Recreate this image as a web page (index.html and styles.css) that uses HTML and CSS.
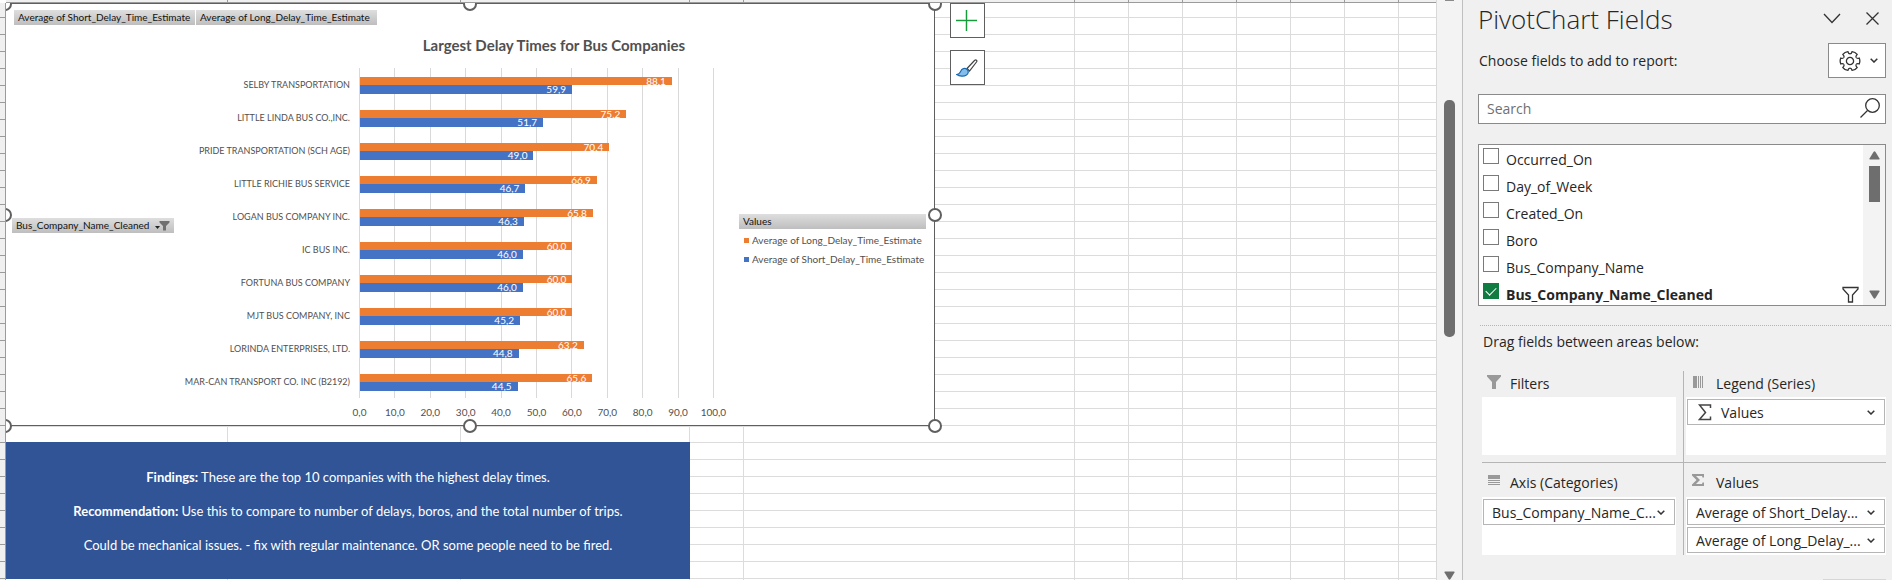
FILE: index.html
```html
<!DOCTYPE html>
<html lang="en">
<head>
<meta charset="utf-8">
<title>Bus delays workbook</title>
<link rel="stylesheet" href="styles.css">
</head>
<body>
<div class="app">
  <main class="workbook">
    <div class="column-heads columns"><i></i><i></i><i></i><i></i><i></i><i></i><i></i><i></i><i></i><i></i><i></i><i></i></div>
    <div class="row-heads"></div>
    <div class="cells">
      <div class="gridlines columns"><i></i><i></i><i></i><i></i><i></i><i></i><i></i><i></i><i></i><i></i><i></i><i></i></div>
      <div class="objects">
        <div class="chart-group">
          <section class="chart">
            <div class="value-fields">
              <button class="field-button">Average of Short_Delay_Time_Estimate</button>
              <button class="field-button">Average of Long_Delay_Time_Estimate</button>
            </div>
            <h2 class="chart-title">Largest Delay Times for Bus Companies</h2>
            <div class="chart-body">
              <button class="field-button axis-field">Bus_Company_Name_Cleaned
                <svg width="15" height="11" viewBox="0 0 15 11"><path d="M0 6h5L2.500 9z" fill="#222"/><path d="M4.500 1h10v1.500L11 6v4.500H8V6L4.500 2.500z" fill="#707070"/></svg>
              </button>
              <ul class="categories">
                <li>SELBY TRANSPORTATION</li>
                <li>LITTLE LINDA BUS CO.,INC.</li>
                <li>PRIDE TRANSPORTATION (SCH AGE)</li>
                <li>LITTLE RICHIE BUS SERVICE</li>
                <li>LOGAN BUS COMPANY INC.</li>
                <li>IC BUS INC.</li>
                <li>FORTUNA BUS COMPANY</li>
                <li>MJT BUS COMPANY, INC</li>
                <li>LORINDA ENTERPRISES, LTD.</li>
                <li>MAR-CAN TRANSPORT CO. INC (B2192)</li>
              </ul>
              <div class="plot-column">
                <div class="plot">
                  <div class="plot-lines"><i></i><i></i><i></i><i></i><i></i><i></i><i></i><i></i><i></i><i></i><i></i></div>
                  <div class="bars">
                    <div class="pair"><div class="bar long" style="width:88.1%">88,1</div><div class="bar short" style="width:59.9%">59,9</div></div>
                    <div class="pair"><div class="bar long" style="width:75.2%">75,2</div><div class="bar short" style="width:51.7%">51,7</div></div>
                    <div class="pair"><div class="bar long" style="width:70.4%">70,4</div><div class="bar short" style="width:49%">49,0</div></div>
                    <div class="pair"><div class="bar long" style="width:66.9%">66,9</div><div class="bar short" style="width:46.7%">46,7</div></div>
                    <div class="pair"><div class="bar long" style="width:65.8%">65,8</div><div class="bar short" style="width:46.3%">46,3</div></div>
                    <div class="pair"><div class="bar long" style="width:60%">60,0</div><div class="bar short" style="width:46%">46,0</div></div>
                    <div class="pair"><div class="bar long" style="width:60%">60,0</div><div class="bar short" style="width:46%">46,0</div></div>
                    <div class="pair"><div class="bar long" style="width:60%">60,0</div><div class="bar short" style="width:45.2%">45,2</div></div>
                    <div class="pair"><div class="bar long" style="width:63.2%">63,2</div><div class="bar short" style="width:44.8%">44,8</div></div>
                    <div class="pair"><div class="bar long" style="width:65.6%">65,6</div><div class="bar short" style="width:44.5%">44,5</div></div>
                  </div>
                </div>
                <div class="ticks"><span>0,0</span><span>10,0</span><span>20,0</span><span>30,0</span><span>40,0</span><span>50,0</span><span>60,0</span><span>70,0</span><span>80,0</span><span>90,0</span><span>100,0</span></div>
              </div>
              <div class="legend">
                <button class="field-button legend-field">Values</button>
                <div class="legend-item"><i class="swatch long"></i>Average of Long_Delay_Time_Estimate</div>
                <div class="legend-item"><i class="swatch short"></i>Average of Short_Delay_Time_Estimate</div>
              </div>
            </div>
            <i class="handle top left"></i><i class="handle top center"></i><i class="handle top right"></i>
            <i class="handle middle left"></i><i class="handle middle right"></i>
            <i class="handle bottom left"></i><i class="handle bottom center"></i><i class="handle bottom right"></i>
          </section>
          <div class="chart-tools">
            <button class="tool" aria-label="Chart elements"><svg width="21" height="21" viewBox="0 0 21 21"><path d="M10.500 0v21M0 10.500h21" stroke="#8fd0a2" stroke-width="2"/><path d="M10.500 0v21M0 10.500h21" stroke="#189a3c"/></svg></button>
            <button class="tool" aria-label="Chart styles"><svg width="22" height="18" viewBox="0 0 22 18"><path d="M11 9.500 18.500 1.500c1.500-1.300 3 0 2 1.500L13.500 12z" fill="#fff" stroke="#444" stroke-width="1.200"/><path d="M.8 15.500c2.800-.3 3-1.500 4-3.500 1-2.300 4-3.300 6-1.800 2.200 1.700 1.800 4.300-.3 5.800-2.700 1.800-7.200 1.300-9.700-.5z" fill="#83bdec" stroke="#1769b5" stroke-width="1.200"/></svg></button>
          </div>
        </div>
        <section class="findings">
          <p><strong>Findings:</strong> These are the top 10 companies with the highest delay times.</p>
          <p><strong>Recommendation:</strong> Use this to compare to number of delays, boros, and the total number of trips.</p>
          <p>Could be mechanical issues. - fix with regular maintenance. OR some people need to be fired.</p>
        </section>
      </div>
    </div>
  </main>

  <div class="sheet-scroll">
    <i class="arrow-stub"></i>
    <i class="scroll-thumb"></i>
    <svg class="scroll-down" width="11" height="9" viewBox="0 0 11 9"><path d="M1 .5h9q1 0 .5 1L6.500 8q-1 1.500-2 0L.5 1.500Q0 .5 1 .5z" fill="#6e6e6e"/></svg>
  </div>

  <aside class="pane">
    <header class="pane-head">
      <h1>PivotChart Fields</h1>
      <button class="icon-button" aria-label="Pane options"><svg width="18" height="11" viewBox="0 0 18 11"><path d="M1 1l8 8.500L17 1"/></svg></button>
      <button class="icon-button" aria-label="Close"><svg width="13" height="13" viewBox="0 0 13 13"><path d="M.5.5l12 12M12.500.5l-12 12"/></svg></button>
    </header>
    <div class="choose">
      <span>Choose fields to add to report:</span>
      <button class="gear" aria-label="Tools">
        <svg width="22" height="22" viewBox="-11 -11 22 22"><circle r="3.600"/><path id="tooth" d="M6.100 -3.500Q7 -2.200 9.200 -2.900Q10.500 0 9.200 2.900Q7 2.200 6.100 3.500"/><use href="#tooth" transform="rotate(60)"/><use href="#tooth" transform="rotate(120)"/><use href="#tooth" transform="rotate(180)"/><use href="#tooth" transform="rotate(240)"/><use href="#tooth" transform="rotate(300)"/></svg>
        <svg class="chevron" width="8" height="5" viewBox="0 0 8 5"><path d="M.7.7L4 4 7.300.7"/></svg>
      </button>
    </div>
    <div class="search">
      <input type="text" placeholder="Search" aria-label="Search">
      <svg width="20" height="20" viewBox="0 0 20 20"><circle cx="12.500" cy="7.500" r="6.800"/><path d="M7.500 12.500L.5 19.500"/></svg>
    </div>
    <div class="fields">
      <div class="field-list">
        <label><input type="checkbox">Occurred_On</label>
        <label><input type="checkbox">Day_of_Week</label>
        <label><input type="checkbox">Created_On</label>
        <label><input type="checkbox">Boro</label>
        <label><input type="checkbox">Bus_Company_Name</label>
        <label class="used"><input type="checkbox" checked>Bus_Company_Name_Cleaned
          <svg width="17" height="17" viewBox="0 0 17 17"><path d="M1 1.500h15v1.500l-5.500 6V16h-4V9L1 3z"/></svg></label>
      </div>
      <div class="list-scroll">
        <svg width="11" height="9" viewBox="0 0 11 9"><path d="M1 8.500h9q1 0 .5-1L6.500 1q-1-1.500-2 0L.5 7.500Q0 8.500 1 8.500z"/></svg>
        <i></i>
        <svg width="11" height="9" viewBox="0 0 11 9"><path d="M1 .5h9q1 0 .5 1L6.500 8q-1 1.500-2 0L.5 1.500Q0 .5 1 .5z"/></svg>
      </div>
    </div>
    <p class="drag">Drag fields between areas below:</p>
    <div class="areas">
      <section class="area">
        <h3><svg width="16" height="16" viewBox="0 0 16 16"><path d="M1 0h14v1.500L10 7v7H6V7L1 1.500z" fill="#999"/></svg>Filters</h3>
        <div class="drop"></div>
      </section>
      <section class="area">
        <h3><svg width="16" height="16" viewBox="0 0 16 16"><path d="M3 1h4v12H3zM8 1h1v12H8zM10 1h1v12h-1zM12 1h1v12h-1z" fill="#999"/></svg>Legend (Series)</h3>
        <div class="drop">
          <button class="item"><svg class="sigma" width="14" height="17" viewBox="0 0 14 17"><path d="M12.500 4V1H1.500l6 7.500-6 7h11v-3" fill="none" stroke="#444" stroke-width="1.500"/></svg>Values<svg class="chevron" width="8" height="5" viewBox="0 0 8 5"><path d="M.7.7L4 4 7.300.7"/></svg></button>
        </div>
      </section>
      <section class="area">
        <h3><svg width="16" height="16" viewBox="0 0 16 16"><path d="M2 1h12v4H2zM2 6h12v1H2zM2 8h12v1H2zM2 10h12v1H2z" fill="#999"/></svg>Axis (Categories)</h3>
        <div class="drop">
          <button class="item">Bus_Company_Name_C...<svg class="chevron" width="8" height="5" viewBox="0 0 8 5"><path d="M.7.7L4 4 7.300.7"/></svg></button>
        </div>
      </section>
      <section class="area">
        <h3><svg width="16" height="16" viewBox="0 0 16 16"><path d="M2 0h12v3.500h-1.500L12 2H6l4 4-4 4h6l.5-1.500H14V12H2v-1.500L6.500 6 2 1.500z" fill="#999"/></svg>Values</h3>
        <div class="drop">
          <button class="item">Average of Short_Delay...<svg class="chevron" width="8" height="5" viewBox="0 0 8 5"><path d="M.7.7L4 4 7.300.7"/></svg></button>
          <button class="item">Average of Long_Delay_...<svg class="chevron" width="8" height="5" viewBox="0 0 8 5"><path d="M.7.7L4 4 7.300.7"/></svg></button>
        </div>
      </section>
    </div>
    <div class="update-edge"></div>
  </aside>
</div>
</body>
</html>
```
FILE: styles.css
```css
* { box-sizing: border-box; }
body { margin: 0; font-family: "Open Sans", "Noto Sans", sans-serif; font-size: 14px; color: #262626; }
h1, h2, h3, p, ul { margin: 0; padding: 0; font-weight: 400; }
ul { list-style: none; }
button { font: inherit; color: inherit; padding: 0; margin: 0; border: 0; background: none; }
svg { flex: none; display: block; }

.app { display: flex; height: 100vh; overflow: hidden; }

/* worksheet */
.workbook { flex: 1; min-width: 0; display: grid; grid-template: 3px 1fr / 6px 1fr; background: #fff; border-right: 1px solid #d9d9d9; }
.columns { display: grid; grid-template-columns: 222px 233px 229px 54px 331px repeat(6, 54px) 1fr; }
.columns i { border-right: 1px solid #dcdcdc; }
.columns i:last-child { border-right: 0; }
.column-heads { grid-column: 2; background: #f0f0f0; border-bottom: 1px solid #9b9b9b; }
.column-heads i { border-color: #9b9b9b; }
.row-heads { grid-column: 1; grid-row: 2; border-right: 1px solid #9b9b9b; background: #f0f0f0 repeating-linear-gradient(#0000 0 14px, #9b9b9b 14px 15px, #0000 15px 17px); }
.cells { grid-column: 2; grid-row: 2; display: grid; overflow: hidden; min-height: 0; }
.gridlines, .objects { grid-area: 1 / 1; min-height: 0; }
.gridlines { background: repeating-linear-gradient(#0000 0 14px, #dcdcdc 14px 15px, #0000 15px 17px); }
.objects { display: flex; flex-direction: column; align-items: flex-start; gap: 16px; font-family: Lato, Carlito, sans-serif; }
.chart-group { display: flex; gap: 15px; align-items: flex-start; }

/* chart */
.chart { position: relative; width: 929px; padding: 6px 8px 4px 6px; background: #fff; border: 1px solid #5f5f5f; border-left: 0; color: #505050; box-shadow: 0 1px #dcdcdc; }
.value-fields { display: flex; gap: 1px; padding-left: 2px; }
.field-button { display: flex; align-items: center; height: 15px; padding: 0 4px; font-size: 10px; line-height: 15px; color: #111; background: linear-gradient(#dedede, #bebebe); white-space: nowrap; }
.value-fields .field-button { width: 181px; }
.chart-title { margin: 10px 0 13px 170px; font-size: 15px; font-weight: 700; line-height: 20px; text-align: center; }
.chart-body { display: flex; align-items: flex-start; }
.axis-field { width: 162px; margin-top: 150px; justify-content: space-between; }
.categories { flex: 1; padding-right: 9px; font-size: 9px; text-align: right; white-space: nowrap; }
.categories li { line-height: 33px; }
.plot-column { width: 355px; }
.plot { display: grid; }
.plot-lines, .bars { grid-area: 1 / 1; }
.plot-lines { display: flex; justify-content: space-between; }
.plot-lines i { width: 1px; background: #d9d9d9; }
.bars { padding-left: 1px; }
.pair { padding: 9px 0 7px; }
.bar { position: relative; padding-right: 6px; color: #fff; font-size: 10px; text-align: right; }
.long { background: #ed7d31; }
.short { background: #4472c4; }
.bar.long { height: 8px; line-height: 9px; }
.bar.short { height: 9px; line-height: 9px; }
.ticks { display: flex; justify-content: space-between; margin-top: 5px; font-size: 10px; line-height: 18px; }
.ticks span { display: flex; justify-content: center; width: 1px; white-space: nowrap; }
.legend { width: 187px; margin: 146px 0 0 25px; font-size: 10px; }
.legend-field { width: 100%; margin-bottom: 2px; }
.legend-item { display: flex; align-items: center; gap: 3px; padding-left: 5px; line-height: 19px; white-space: nowrap; }
.swatch { width: 5px; height: 5px; }
.handle { position: absolute; width: 14px; height: 14px; border: 2px solid #5f5f5f; border-radius: 50%; background: #fff; }
.handle.top { top: -7px; }
.handle.middle { top: calc(50% - 7px); }
.handle.bottom { bottom: -8px; }
.handle.left { left: -8px; }
.handle.center { left: calc(50% - 7px); }
.handle.right { right: -8px; }
.chart-tools { display: flex; flex-direction: column; gap: 12px; }
.tool { display: flex; align-items: center; justify-content: center; width: 35px; height: 35px; padding-right: 2px; background: #fff; border: 1px solid #5f5f5f; }

.findings { width: 684px; padding: 18px 0 17px; background: #305496; color: #fff; font-size: 13px; line-height: 34px; text-align: center; white-space: nowrap; }

/* worksheet scroll bar */
.sheet-scroll { display: flex; flex-direction: column; align-items: center; width: 25px; background: #f3f3f3; }
.arrow-stub { width: 9px; height: 1px; margin-bottom: 99px; background: #8a8a8a; }
.scroll-thumb { width: 11px; height: 237px; border-radius: 5px; background: #6e6e6e; }
.scroll-down { margin-top: auto; }

/* field pane */
.pane { display: flex; flex-direction: column; width: 430px; padding: 0 6px 0 15px; background: #f0f0f0; border-left: 1px solid #bfbfbf; }
.pane svg { fill: none; stroke: #333; stroke-width: 1.3px; }
.pane-head { display: flex; align-items: center; height: 37px; margin-bottom: 6px; padding-right: 7px; }
.pane-head h1 { flex: 1; font-size: 26px; line-height: 36px; font-weight: 300; }
.icon-button + .icon-button { margin-left: 25px; }
.choose { display: flex; align-items: center; justify-content: space-between; padding-left: 1px; }
.gear { display: flex; align-items: center; justify-content: center; gap: 9px; width: 58px; height: 35px; padding-left: 2px; background: #fff; border: 1px solid #8a8a8a; }
.pane .chevron { stroke-width: 1.5px; }
.search { display: flex; align-items: center; height: 30px; margin: 16px 0 20px; padding: 0 5px 2px 8px; background: #fff; border: 1px solid #8a8a8a; }
.search input { flex: 1; min-width: 0; padding: 0; border: 0; outline: 0; background: none; font: inherit; }
.search input::placeholder { color: #707070; opacity: 1; }
.fields { display: flex; height: 162px; background: #fff; border: 1px solid #8a8a8a; }
.field-list { flex: 1; overflow: hidden; }
.field-list label { display: flex; align-items: flex-start; height: 27px; padding: 3px 4px 0; line-height: 24px; }
.field-list input { appearance: none; flex: none; width: 16px; height: 16px; margin: 0 7px 0 0; border: 1px solid #7a7a7a; background: #fff; }
.field-list input:checked { background: #107c41; border-color: #107c41; }
.field-list input:checked::before { content: ""; display: block; width: 9px; height: 5px; margin: 3px 0 0 2px; border: solid #fff; border-width: 0 0 1px 1px; transform: rotate(-45deg); }
.field-list .used { font-weight: 700; }
.used svg { margin: 3px 0 0 auto; }
.list-scroll { display: flex; flex-direction: column; align-items: center; width: 22px; padding: 6px 0; background: #f3f3f3; }
.pane .list-scroll svg { fill: #6e6e6e; stroke: none; }
.list-scroll i { width: 11px; height: 36px; margin: 6px 0 auto; background: #6e6e6e; }
.drag { margin: 19px -5px 19px 2px; padding: 6px 0 0 3px; border-top: 1px dotted #b5b5b5; line-height: 20px; }
.areas { display: grid; grid-template-columns: 1fr 1fr; padding-left: 4px; }
.area { display: flex; flex-direction: column; }
.area h3 { display: flex; align-items: center; gap: 8px; height: 26px; padding: 0 0 2px 4px; font-size: 14px; }
.area h3 svg { stroke-width: 0; }
.area:nth-child(odd) { padding-right: 7px; border-right: 1px solid #b5b5b5; }
.area:nth-child(even) { padding-left: 2px; }
.area:nth-child(-n+2) { padding-bottom: 7px; border-bottom: 1px solid #b5b5b5; }
.area:nth-child(n+3) h3 { height: 34px; padding: 4px 0 0 4px; }
.area:nth-child(even) h3 { gap: 10px; }
.drop { display: flex; flex-direction: column; gap: 2px; min-height: 58px; padding: 2px 1px; background: #fff; }
.item { display: flex; align-items: center; height: 26px; padding: 0 9px 0 8px; background: #fff; border: 1px solid #b5b5b5; white-space: nowrap; }
.item .chevron { margin-left: auto; }
.sigma { margin: 0 9px 0 2px; }
.update-edge { width: 63px; height: 1px; margin: auto 0 0 auto; background: #d6d6d6; }
```
